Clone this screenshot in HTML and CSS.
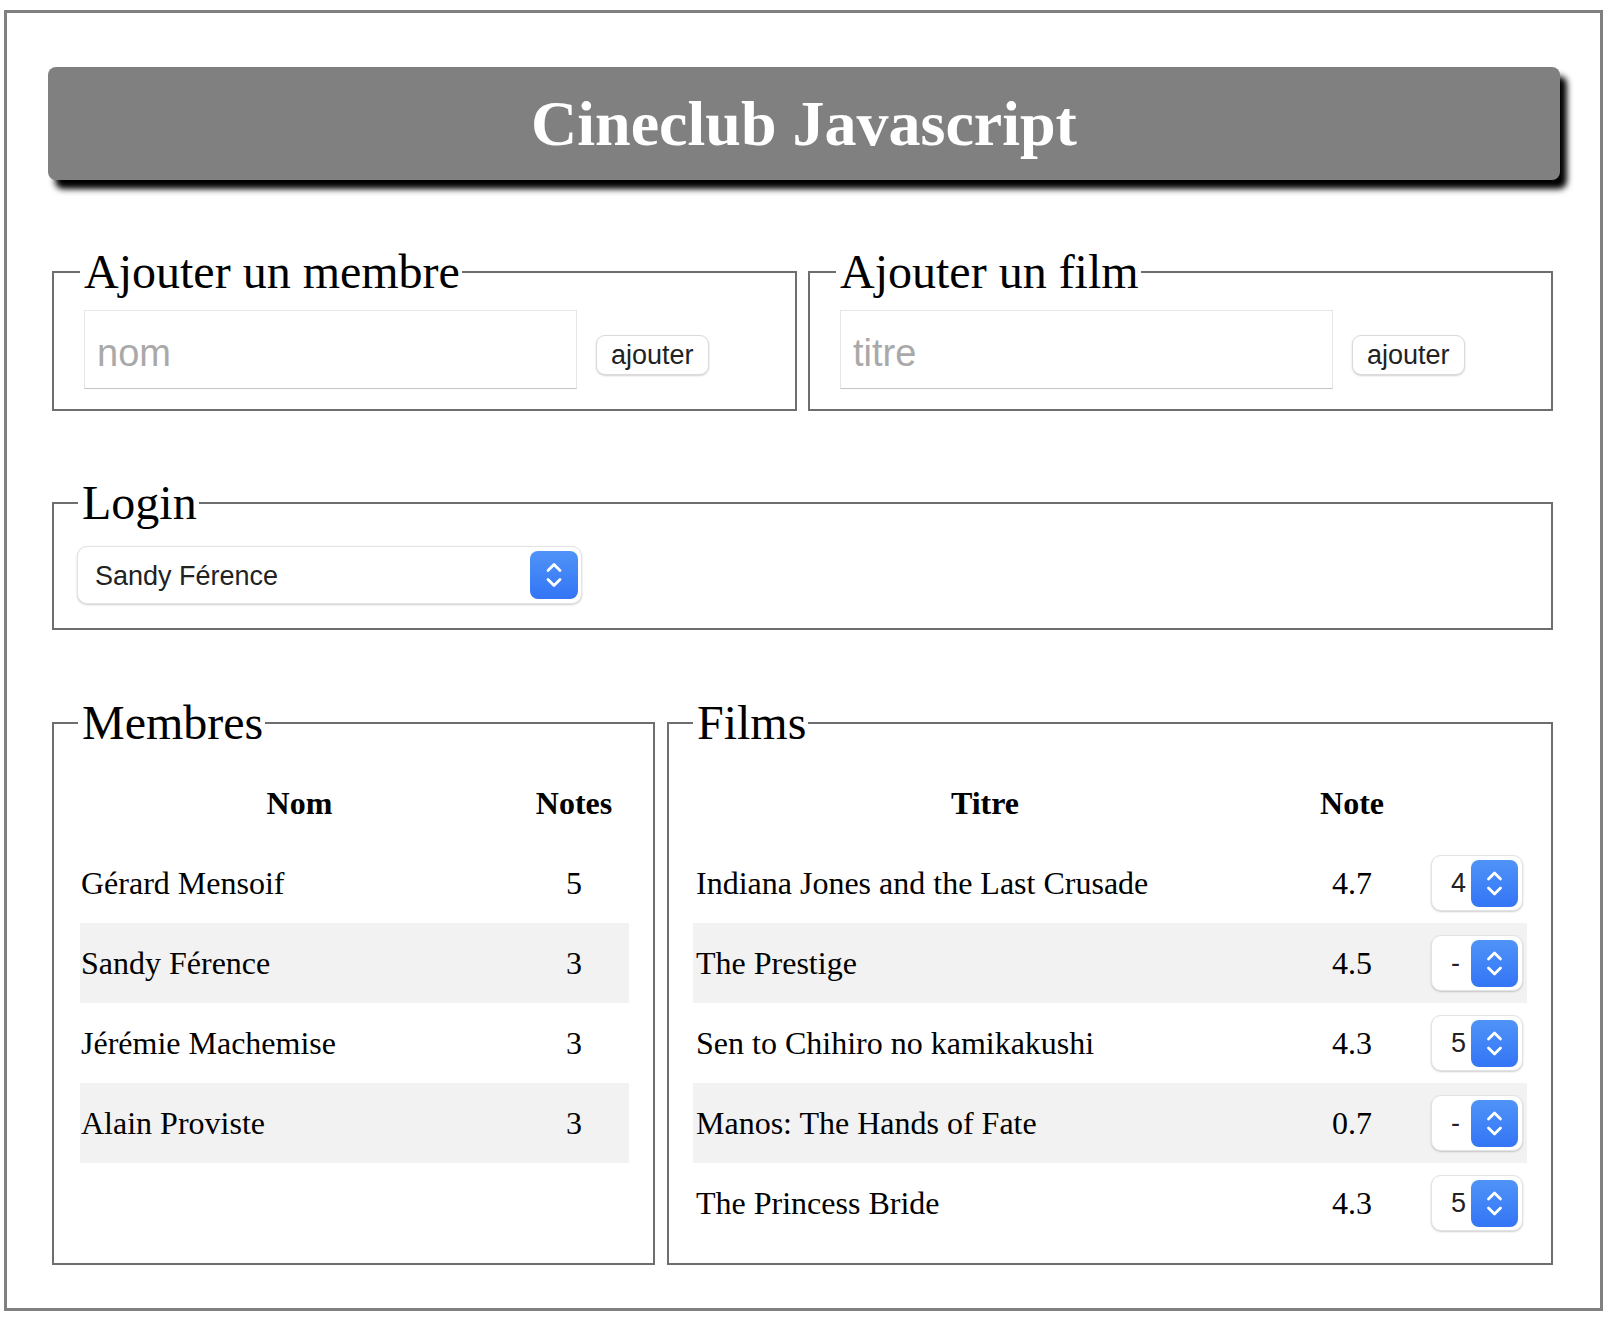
FILE: index.html
```html
<!DOCTYPE html>
<html lang="fr">
<head>
<meta charset="utf-8">
<title>Cineclub Javascript</title>
<link rel="stylesheet" href="styles.css">
</head>
<body>
<div class="page">
  <h1 class="banner">Cineclub Javascript</h1>

  <div class="row row-add">
    <fieldset class="box box-half">
      <legend>Ajouter un membre</legend>
      <div class="add-line">
        <input class="text-input" type="text" placeholder="nom">
        <button class="add-btn" type="button">ajouter</button>
      </div>
    </fieldset>
    <fieldset class="box box-half">
      <legend>Ajouter un film</legend>
      <div class="add-line">
        <input class="text-input" type="text" placeholder="titre">
        <button class="add-btn" type="button">ajouter</button>
      </div>
    </fieldset>
  </div>

  <div class="row row-login">
    <fieldset class="box box-full">
      <legend>Login</legend>
      <div class="picker picker-login">
        <span class="picker-value">Sandy Férence</span>
        <span class="picker-btn"><svg width="48" height="48" viewBox="0 0 48 48"><polyline points="18,19.5 24,13.5 30,19.5" fill="none" stroke="#fff" stroke-width="2.8" stroke-linecap="round" stroke-linejoin="round"/><polyline points="18,28.5 24,34.5 30,28.5" fill="none" stroke="#fff" stroke-width="2.8" stroke-linecap="round" stroke-linejoin="round"/></svg></span>
      </div>
    </fieldset>
  </div>

  <div class="row row-lists">
    <fieldset class="box box-members">
      <legend>Membres</legend>
      <table class="list list-members">
        <colgroup><col class="c-name"><col class="c-notes"></colgroup>
        <thead><tr><th>Nom</th><th>Notes</th></tr></thead>
        <tbody>
          <tr><td>Gérard Mensoif</td><td class="num">5</td></tr>
          <tr><td>Sandy Férence</td><td class="num">3</td></tr>
          <tr><td>Jérémie Machemise</td><td class="num">3</td></tr>
          <tr><td>Alain Proviste</td><td class="num">3</td></tr>
        </tbody>
      </table>
    </fieldset>
    <fieldset class="box box-films">
      <legend>Films</legend>
      <table class="list">
        <colgroup><col class="c-title"><col class="c-note"><col class="c-pick"></colgroup>
        <thead><tr><th>Titre</th><th>Note</th><th></th></tr></thead>
        <tbody>
          <tr><td>Indiana Jones and the Last Crusade</td><td class="num">4.7</td><td class="pick"><div class="picker picker-small"><span class="picker-value">4</span><span class="picker-btn"><svg width="47" height="47" viewBox="0 0 47 47"><polyline points="17.5,19 23.5,13 29.5,19" fill="none" stroke="#fff" stroke-width="2.8" stroke-linecap="round" stroke-linejoin="round"/><polyline points="17.5,28 23.5,34 29.5,28" fill="none" stroke="#fff" stroke-width="2.8" stroke-linecap="round" stroke-linejoin="round"/></svg></span></div></td></tr>
          <tr><td>The Prestige</td><td class="num">4.5</td><td class="pick"><div class="picker picker-small"><span class="picker-value">-</span><span class="picker-btn"><svg width="47" height="47" viewBox="0 0 47 47"><polyline points="17.5,19 23.5,13 29.5,19" fill="none" stroke="#fff" stroke-width="2.8" stroke-linecap="round" stroke-linejoin="round"/><polyline points="17.5,28 23.5,34 29.5,28" fill="none" stroke="#fff" stroke-width="2.8" stroke-linecap="round" stroke-linejoin="round"/></svg></span></div></td></tr>
          <tr><td>Sen to Chihiro no kamikakushi</td><td class="num">4.3</td><td class="pick"><div class="picker picker-small"><span class="picker-value">5</span><span class="picker-btn"><svg width="47" height="47" viewBox="0 0 47 47"><polyline points="17.5,19 23.5,13 29.5,19" fill="none" stroke="#fff" stroke-width="2.8" stroke-linecap="round" stroke-linejoin="round"/><polyline points="17.5,28 23.5,34 29.5,28" fill="none" stroke="#fff" stroke-width="2.8" stroke-linecap="round" stroke-linejoin="round"/></svg></span></div></td></tr>
          <tr><td>Manos: The Hands of Fate</td><td class="num">0.7</td><td class="pick"><div class="picker picker-small"><span class="picker-value">-</span><span class="picker-btn"><svg width="47" height="47" viewBox="0 0 47 47"><polyline points="17.5,19 23.5,13 29.5,19" fill="none" stroke="#fff" stroke-width="2.8" stroke-linecap="round" stroke-linejoin="round"/><polyline points="17.5,28 23.5,34 29.5,28" fill="none" stroke="#fff" stroke-width="2.8" stroke-linecap="round" stroke-linejoin="round"/></svg></span></div></td></tr>
          <tr><td>The Princess Bride</td><td class="num">4.3</td><td class="pick"><div class="picker picker-small"><span class="picker-value">5</span><span class="picker-btn"><svg width="47" height="47" viewBox="0 0 47 47"><polyline points="17.5,19 23.5,13 29.5,19" fill="none" stroke="#fff" stroke-width="2.8" stroke-linecap="round" stroke-linejoin="round"/><polyline points="17.5,28 23.5,34 29.5,28" fill="none" stroke="#fff" stroke-width="2.8" stroke-linecap="round" stroke-linejoin="round"/></svg></span></div></td></tr>
        </tbody>
      </table>
    </fieldset>
  </div>
</div>
</body>
</html>
```

FILE: styles.css
```css
* {
  box-sizing: border-box;
}

html {
  background: #fff;
}

body {
  margin: 10px 9px 11px 4px;
  font-family: "Liberation Serif", "Times New Roman", serif;
  font-size: 32px;
  color: #000;
}

.page {
  border: 3px solid #808080;
  padding: 54px 40px 43px 41px;
}

.banner {
  margin: 0 0 64px;
  padding: 20px 0;
  background: #808080;
  color: #fff;
  font-size: 64px;
  font-weight: bold;
  line-height: 73px;
  text-align: center;
  border-radius: 8px;
  box-shadow: 7px 9px 6px #000;
}

.row {
  display: flex;
  margin: 0 7px 0 4px;
}

.row-add {
  gap: 11px;
}

.row-login {
  margin-top: 64px;
}

.row-lists {
  margin-top: 65px;
  gap: 12px;
  align-items: stretch;
}

.box {
  margin: 0;
  min-width: 0;
  border: 2px solid #6e6e6e;
  padding: 11px 24px 20px;
}

.box-half {
  flex: 1 1 0;
  padding-left: 26px;
}

.box-full {
  flex: 1 1 auto;
}

.box-members {
  flex: 0 0 603px;
  padding-top: 13px;
}

.box-films {
  flex: 1 1 0;
  padding-top: 13px;
}

legend {
  font-size: 48px;
  line-height: 55px;
  padding: 0 2px 0 4px;
}

.add-line {
  display: flex;
  align-items: flex-start;
}

.text-input {
  width: 493px;
  height: 79px;
  margin: 0 0 0 4px;
  padding: 8px 12px 0;
  font-family: "Liberation Sans", Arial, sans-serif;
  font-size: 38px;
  color: #222;
  background: #fff;
  border: 1px solid #e6e6e6;
  border-bottom-color: #c4c4c4;
  border-radius: 0;
  outline: none;
}

.text-input::placeholder {
  color: #a9a9a9;
}

.add-btn {
  margin: 25px 0 0 19px;
  height: 40px;
  padding: 0 14px;
  font-family: "Liberation Sans", Arial, sans-serif;
  font-size: 27px;
  color: #222;
  background: #fff;
  border: 1px solid #dadada;
  border-radius: 9px;
  box-shadow: 0 1px 2px rgba(0, 0, 0, 0.18);
}

.picker {
  display: flex;
  align-items: center;
  justify-content: space-between;
  background: #fff;
  border: 1px solid #e3e3e3;
  border-radius: 10px;
  box-shadow: 0 1px 2px rgba(0, 0, 0, 0.2);
  font-family: "Liberation Sans", Arial, sans-serif;
  color: #222;
}

.picker-login {
  width: 505px;
  height: 58px;
  margin: 5px 0 4px -1px;
  padding: 0 3px 0 17px;
  font-size: 27px;
}

.picker-login .picker-value {
  padding-top: 3px;
}

.picker-small {
  width: 92px;
  height: 56px;
  padding: 0 4px 0 19px;
  font-size: 27px;
}

.picker-btn {
  display: flex;
  align-items: center;
  justify-content: center;
  width: 48px;
  height: 48px;
  border-radius: 8px;
  background: linear-gradient(#4f93f8, #3375f5);
}

.picker-small .picker-btn {
  width: 47px;
  height: 47px;
}

.picker-btn svg {
  display: block;
}

.list {
  width: 100%;
  table-layout: fixed;
  border-collapse: collapse;
  border-spacing: 0;
  font-size: 32px;
}

.list-members {
  width: calc(100% - 2px);
  margin-left: 2px;
}

.list th,
.list td {
  height: 80px;
  padding: 0 1px;
  line-height: 36px;
  vertical-align: middle;
}

.list th {
  font-weight: bold;
  text-align: center;
}

.list td {
  text-align: left;
}

.list td:first-child {
  padding-left: 3px;
}

.list-members td:first-child {
  padding-left: 1px;
}

.list td.num {
  text-align: center;
}

.list td.pick {
  padding-left: 4px;
}

.list tbody tr:nth-child(even) td {
  background: #f2f2f2;
}

.c-name {
  width: 439px;
}

.c-notes {
  width: 110px;
}

.c-title {
  width: 584px;
}

.c-note {
  width: 150px;
}

.c-pick {
  width: 100px;
}
```
